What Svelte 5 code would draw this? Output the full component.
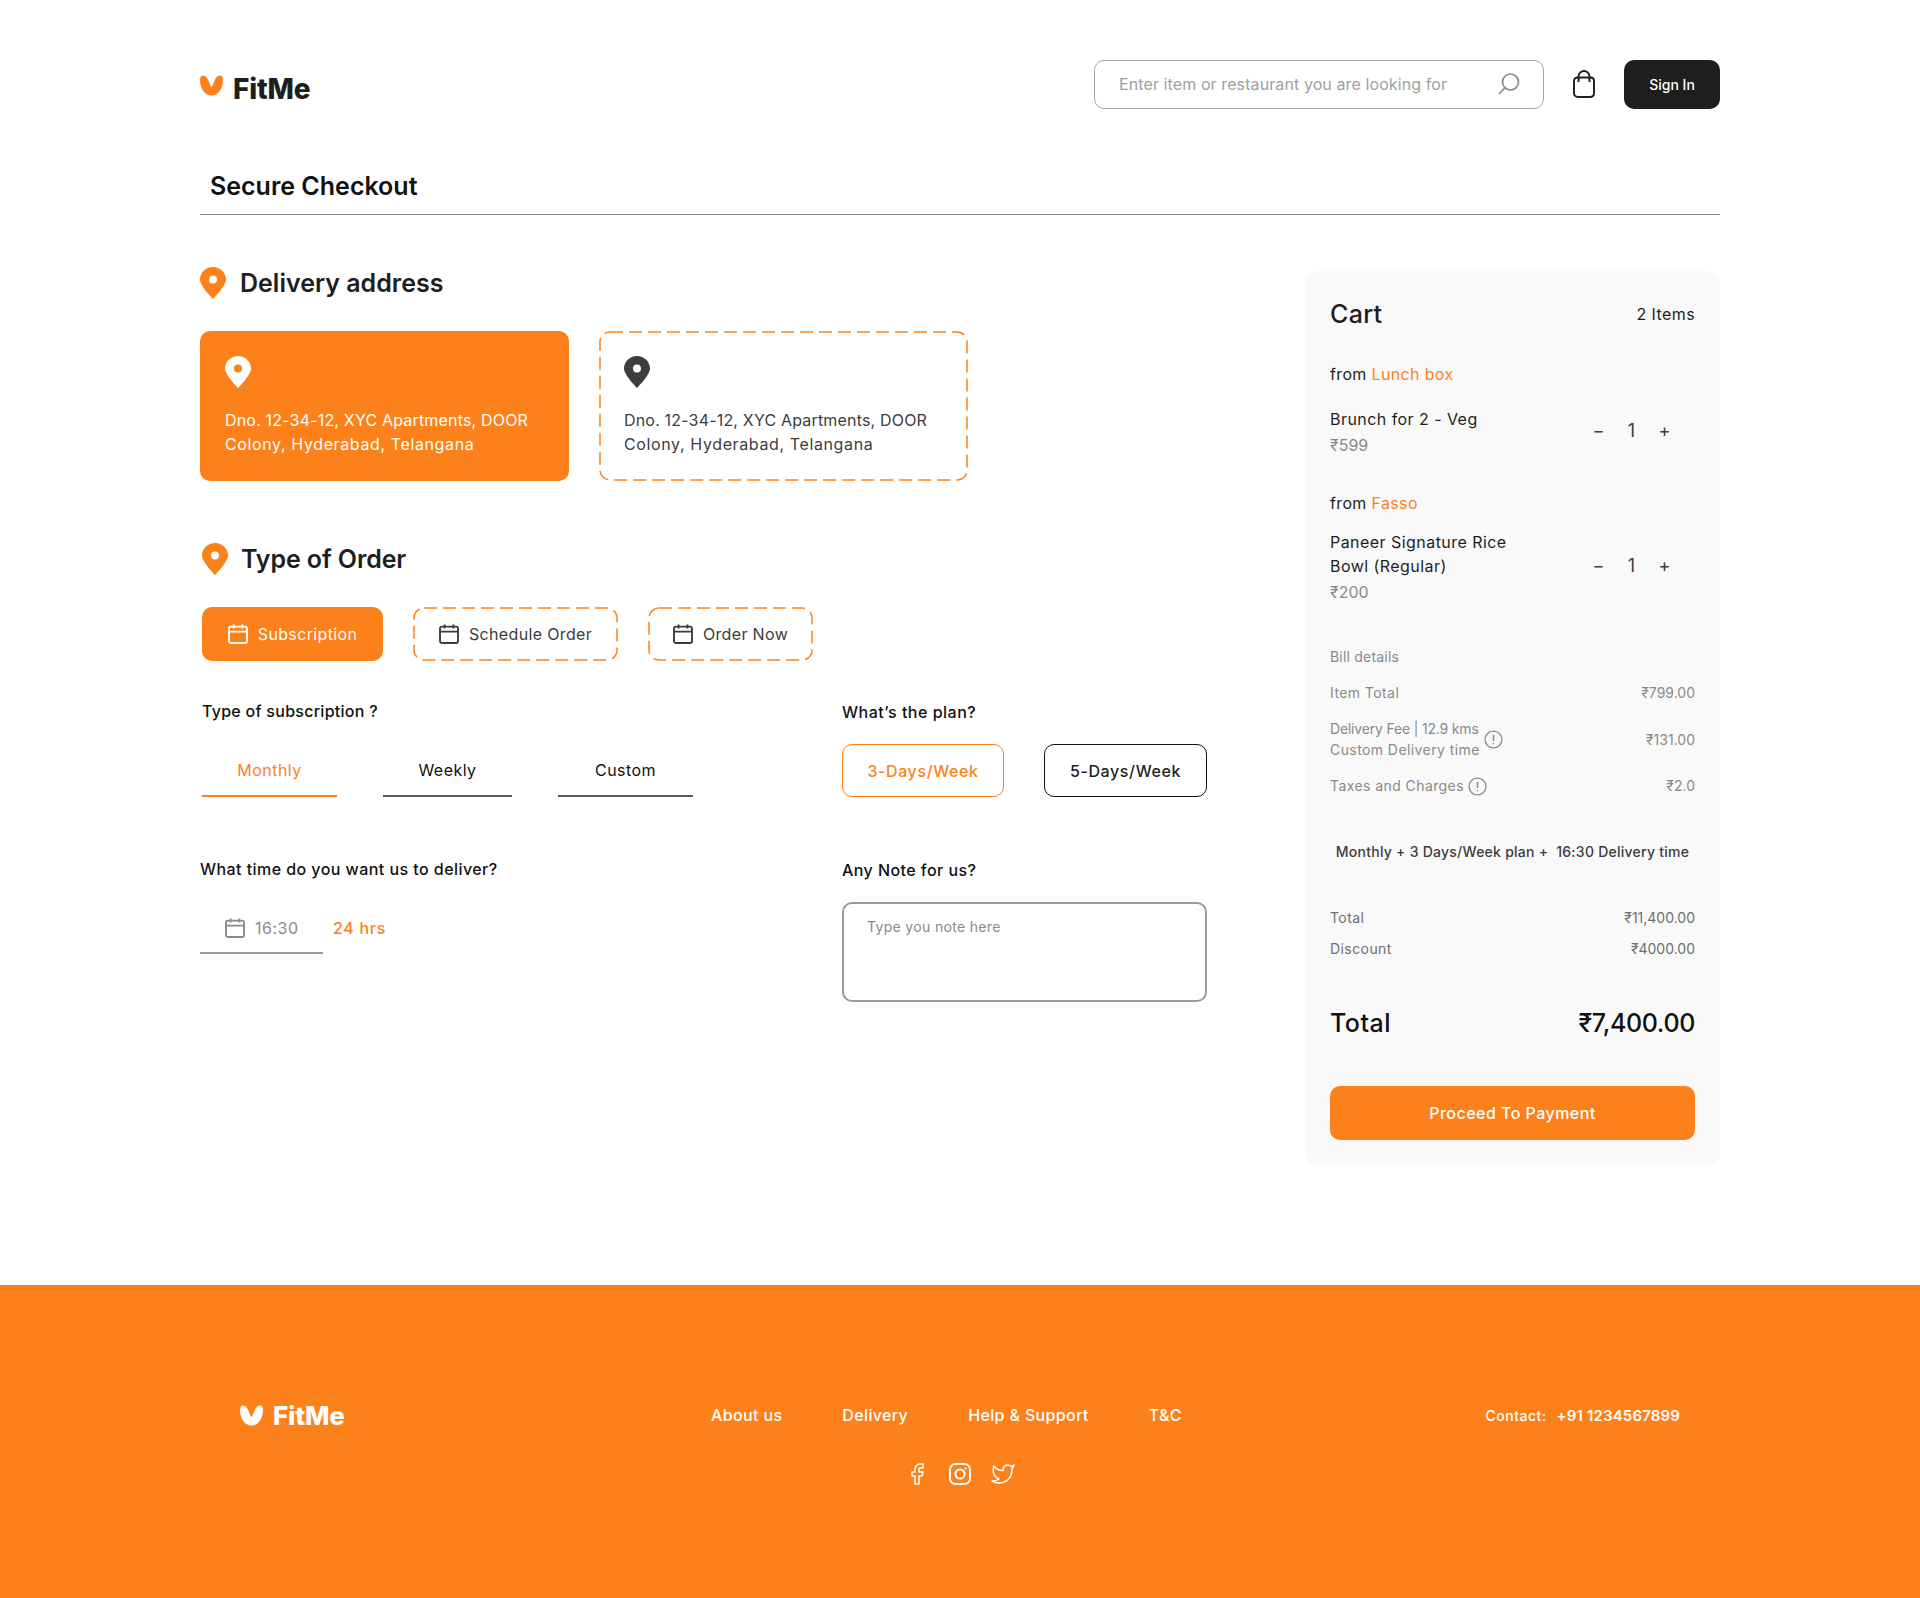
<script lang="ts">
  const addresses = [
    { id: 1, active: true, line1: 'Dno. 12-34-12, XYC Apartments, DOOR', line2: 'Colony, Hyderabad, Telangana' },
    { id: 2, active: false, line1: 'Dno. 12-34-12, XYC Apartments, DOOR', line2: 'Colony, Hyderabad, Telangana' }
  ];
  const orderTypes = [
    { label: 'Subscription', active: true, w: 181 },
    { label: 'Schedule Order', active: false, w: 205 },
    { label: 'Order Now', active: false, w: 165 }
  ];
  const tabs = [
    { label: 'Monthly', w: 135, gap: 46 },
    { label: 'Weekly', w: 129, gap: 46 },
    { label: 'Custom', w: 135, gap: 0 }
  ];
  const links = ['About us', 'Delivery', 'Help & Support', 'T&C'];
</script>

{#snippet logo()}
  <svg class="logo-mark" viewBox="0 0 24 22" aria-hidden="true">
    <path fill="currentColor" d="M3 0.5C1 0.5 0 2.5 0 5.5 0 14 5 21.5 12 21.5S24 14 24 5.5C24 2.5 23 0.5 21 0.5 18 0.5 16 3.5 14.5 7.5 13.5 10.5 12.6 12.5 12 12.5S10.5 10.5 9.5 7.5C8 3.5 6 0.5 3 0.5Z" />
  </svg>
{/snippet}

{#snippet pin(cls: string)}
  <svg class="pin {cls}" viewBox="0 0 26 32" aria-hidden="true">
    <path fill="currentColor" fill-rule="evenodd" d="M13 0C5.8 0 0 5.8 0 12.5 0 19 13 32 13 32S26 19 26 12.5C26 5.8 20.2 0 13 0ZM13 8.5A4 4 0 1 1 13 16.5 4 4 0 1 1 13 8.5Z" />
  </svg>
{/snippet}

{#snippet calendar()}
  <svg class="cal" viewBox="0 0 20 20" fill="none" stroke="currentColor" stroke-width="1.9" aria-hidden="true">
    <rect x="1" y="2.6" width="18" height="16.4" rx="2" />
    <path d="M1 7.6H19M5.6 0.4V4.4M14.4 0.4V4.4" />
  </svg>
{/snippet}

{#snippet dashes()}
  <svg class="dashes" aria-hidden="true"><rect x="1" y="1" rx="10" ry="10" /></svg>
{/snippet}

{#snippet info()}
  <svg class="info" viewBox="0 0 18 18" fill="none" stroke="currentColor" stroke-width="1.2" aria-hidden="true">
    <circle cx="9" cy="9" r="8" />
    <path d="M9 4.4V10.4M9 12.2V13.6" stroke-width="1.4" />
  </svg>
{/snippet}

<div class="wrap">
  <header class="top">
    <div class="brand">{@render logo()}<span>FitMe</span></div>
    <div class="search">
      <span class="search-text">Enter item or restaurant you are looking for</span>
      <svg class="search-icon" viewBox="0 0 22 22" fill="none" stroke="#8a8a8a" stroke-width="1.7" aria-hidden="true">
        <circle cx="12.5" cy="9" r="8" />
        <path d="M6.8 15 1 21" />
      </svg>
    </div>
    <svg class="bag" viewBox="0 0 22 28" fill="none" stroke="#1e1e1e" stroke-width="1.9" aria-hidden="true">
      <path d="M4.5 7.5H17.5C19.5 7.5 21 9 21 11V23C21 25.5 19.5 27 17 27H5C2.5 27 1 25.5 1 23V11C1 9 2.5 7.5 4.5 7.5Z" />
      <path d="M5.5 12V6.5a5.5 5.5 0 0 1 11 0V12" />
    </svg>
    <button class="signin">Sign In</button>
  </header>

  <h1 class="page-title">Secure Checkout</h1>

  <main class="main">
    <div class="left">
      <h2 class="sec-head first">{@render pin('orange')}Delivery address</h2>
      <div class="addr-row">
        {#each addresses as a (a.id)}
          <div class="addr" class:active={a.active}>
            {#if !a.active}{@render dashes()}{/if}
            {@render pin(a.active ? 'white' : 'dark')}
            <p>{a.line1}<br /><span class="addr-l2">{a.line2}</span></p>
          </div>
        {/each}
      </div>

      <h2 class="sec-head second">{@render pin('orange')}Type of Order</h2>
      <div class="order-row">
        {#each orderTypes as o}
          <button class="order-btn" class:active={o.active} style="width:{o.w}px">
            {#if !o.active}{@render dashes()}{/if}
            {@render calendar()}
            {o.label}
          </button>
        {/each}
      </div>

      <div class="form-grid">
        <div class="cell-sub">
          <div class="label">Type of subscription ?</div>
          <div class="tabs">
            {#each tabs as t, i}
              <div class="tab" class:on={i === 0} style="width:{t.w}px;margin-right:{t.gap}px">{t.label}</div>
            {/each}
          </div>
        </div>
        <div>
          <div class="label plan-label">What’s the plan?</div>
          <div class="plans">
            <div class="plan on">3-Days/Week</div>
            <div class="plan">5-Days/Week</div>
          </div>
        </div>
        <div>
          <div class="label wide">What time do you want us to deliver?</div>
          <div class="time-row">
            <div class="time">{@render calendar()}16:30</div>
            <span class="hrs">24 hrs</span>
          </div>
        </div>
        <div>
          <div class="label wide note-label">Any Note for us?</div>
          <div class="note">Type you note here</div>
        </div>
      </div>
    </div>

    <aside class="cart">
      <div class="cart-head"><span class="cart-title">Cart</span><span class="cart-count">2 Items</span></div>

      <div class="from first-from">from <em>Lunch box</em></div>
      <div class="item item-a">
        <div>
          <div class="item-name">Brunch for 2 - Veg</div>
          <div class="item-price">₹599</div>
        </div>
        <div class="qty"><span>−</span><span>1</span><span>+</span></div>
      </div>

      <div class="from second-from">from <em>Fasso</em></div>
      <div class="item item-b">
        <div>
          <div class="item-name">Paneer Signature Rice<br />Bowl (Regular)</div>
          <div class="item-price">₹200</div>
        </div>
        <div class="qty"><span>−</span><span>1</span><span>+</span></div>
      </div>

      <div class="bill-title">Bill details</div>
      <div class="bill"><span>Item Total</span><span>₹799.00</span></div>
      <div class="bill tall">
        <span class="with-info"><span><span class="fee-line">Delivery Fee | 12.9 kms</span><br />Custom Delivery time</span>{@render info()}</span>
        <span>₹131.00</span>
      </div>
      <div class="bill"><span class="with-info">Taxes and Charges{@render info()}</span><span>₹2.0</span></div>

      <div class="summary">Monthly + 3 Days/Week plan +&nbsp; 16:30 Delivery time</div>

      <div class="bill total-a"><span>Total</span><span>₹11,400.00</span></div>
      <div class="bill total-b"><span>Discount</span><span>₹4000.00</span></div>

      <div class="grand"><span class="grand-label">Total</span><span class="grand-amt">₹7,400.00</span></div>
      <button class="pay">Proceed To Payment</button>
    </aside>
  </main>
</div>

<footer class="footer">
  <div class="foot-row">
    <div class="brand foot-brand">{@render logo()}<span>FitMe</span></div>
    <nav class="foot-links">
      {#each links as l}<span>{l}</span>{/each}
    </nav>
    <div class="contact"><span class="c-label">Contact:</span><span class="c-num">+91 1234567899</span></div>
  </div>
  <div class="social">
    <svg viewBox="0 0 24 24" fill="none" stroke="#fff" stroke-width="1.5" stroke-linejoin="round" aria-hidden="true">
      <path d="M18 2h-3a5 5 0 0 0-5 5v3H7v4h3v8h4v-8h3l1-4h-4V7a1 1 0 0 1 1-1h3z" />
    </svg>
    <svg viewBox="0 0 24 24" fill="none" stroke="#fff" stroke-width="2" aria-hidden="true">
      <rect x="2" y="2" width="20" height="20" rx="5.5" />
      <circle cx="12" cy="12" r="4.6" />
      <circle cx="17.6" cy="6.4" r="0.6" fill="#fff" stroke-width="1" />
    </svg>
    <svg viewBox="0 0 24 24" fill="none" stroke="#fff" stroke-width="1.5" stroke-linejoin="round" aria-hidden="true">
      <path d="M23 3a10.9 10.9 0 0 1-3 1.5 4.48 4.48 0 0 0-7.86 3v1A10.66 10.66 0 0 1 3 4s-4 9 5 13a11.64 11.64 0 0 1-7 2c9 5 20 0 20-11.5a4.5 4.5 0 0 0-.08-.83A7.72 7.72 0 0 0 23 3z" />
    </svg>
  </div>
</footer>

<style>
  :global(body) {
    margin: 0;
    background: #fff;
    color: #1e1e1e;
    font-family: Inter, "Noto Sans", sans-serif;
  }

  button {
    font-family: inherit;
    border: 0;
    cursor: pointer;
    padding: 0;
  }

  .wrap {
    width: 1520px;
    margin: 0 auto;
  }

  /* header */
  .top {
    display: flex;
    align-items: center;
    height: 50px;
    padding-top: 59px;
  }

  .brand {
    display: flex;
    align-items: center;
    gap: 10px;
    font-size: 28px;
    font-weight: 800;
    letter-spacing: -0.2px;
    color: #1e1e1e;
    position: relative;
    top: 5px;
  }

  .logo-mark {
    width: 23px;
    height: 21px;
    color: #fd811b;
    margin-top: -8px;
  }

  .search {
    margin-left: auto;
    width: 450px;
    height: 49px;
    box-sizing: border-box;
    border: 1px solid #a3a3a3;
    border-radius: 10px;
    display: flex;
    align-items: center;
    justify-content: space-between;
    padding: 0 23px 0 24px;
  }

  .search-text {
    font-size: 16px;
    letter-spacing: 0.1px;
    color: #a0a0a0;
  }

  .search-icon {
    width: 22px;
    height: 22px;
  }

  .bag {
    width: 22px;
    height: 28px;
    margin: 0 29px;
  }

  .signin {
    width: 96px;
    height: 49px;
    background: #1e1e1e;
    color: #fff;
    border-radius: 10px;
    font-size: 14px;
    font-weight: 500;
  }

  .page-title {
    margin: 57px 0 0;
    padding: 0 0 8px 10px;
    line-height: 40px;
    font-size: 25px;
    font-weight: 600;
    color: #111;
    border-bottom: 1px solid #888;
  }

  .main {
    display: flex;
    justify-content: space-between;
    align-items: flex-start;
    margin-top: 56px;
  }

  .left {
    width: 1010px;
  }

  .sec-head {
    display: flex;
    align-items: center;
    gap: 14px;
    height: 32px;
    margin: 0;
    font-size: 25px;
    font-weight: 600;
    color: #1e1e1e;
  }

  .sec-head.first {
    margin-top: -4px;
  }

  .sec-head.second {
    margin-top: 62px;
    padding-left: 2px;
    gap: 13px;
    letter-spacing: -0.1px;
  }

  .pin {
    width: 26px;
    height: 32px;
    flex: none;
  }

  .pin.orange { color: #fd811b; }
  .pin.white { color: #fff; }
  .pin.dark { color: #3d3d3d; }

  .addr-row {
    display: flex;
    gap: 30px;
    margin-top: 32px;
  }

  .addr {
    position: relative;
    width: 369px;
    height: 150px;
    box-sizing: border-box;
    padding: 25px 25px 0;
    border-radius: 10px;
    color: #3d3d3d;
  }

  .addr.active {
    background: #fd811b;
    color: #fff;
  }

  .addr p {
    margin: 16px 0 0;
    font-size: 16px;
    line-height: 24px;
    letter-spacing: 0.18px;
  }

  .addr-l2 {
    letter-spacing: 0.62px;
  }

  .dashes {
    position: absolute;
    inset: 0;
    width: 100%;
    height: 100%;
    pointer-events: none;
  }

  .dashes rect {
    width: calc(100% - 2px);
    height: calc(100% - 2px);
    fill: none;
    stroke: #fd811b;
    stroke-width: 1.5;
    stroke-dasharray: 13 6;
  }

  .order-row {
    display: flex;
    gap: 30px;
    margin-top: 32px;
    padding-left: 2px;
  }

  .order-btn {
    position: relative;
    height: 54px;
    border-radius: 10px;
    background: none;
    color: #3d3d3d;
    font-size: 16px;
    letter-spacing: 0.35px;
    display: flex;
    align-items: center;
    justify-content: center;
    gap: 10px;
  }

  .order-btn.active {
    background: #fd811b;
    color: #fff;
  }

  .cal {
    width: 20px;
    height: 20px;
    flex: none;
  }

  .form-grid {
    display: grid;
    grid-template-columns: 642px 1fr;
    row-gap: 60px;
    margin-top: 38px;
  }

  .cell-sub {
    padding-left: 2px;
  }

  .label {
    font-size: 16px;
    font-weight: 500;
    line-height: 24px;
    letter-spacing: 0.27px;
    color: #111;
  }

  .label.wide {
    letter-spacing: 0.44px;
  }

  .plan-label {
    letter-spacing: 0.5px;
    position: relative;
    top: 1px;
  }

  .note-label {
    position: relative;
    top: 1px;
  }

  .tabs {
    display: flex;
    margin-top: 20px;
  }

  .tab {
    height: 54px;
    box-sizing: border-box;
    display: flex;
    align-items: center;
    justify-content: center;
    padding-top: 2px;
    font-size: 16px;
    letter-spacing: 0.45px;
    color: #111;
    border-bottom: 2px solid #5a5a5a;
  }

  .tab.on {
    color: #fd811b;
    border-bottom-color: #fd811b;
  }

  .plans {
    display: flex;
    gap: 40px;
    margin-top: 21px;
  }

  .plan {
    width: 163px;
    height: 53px;
    box-sizing: border-box;
    border: 1px solid #111;
    border-radius: 10px;
    display: flex;
    align-items: center;
    justify-content: center;
    font-size: 16px;
    font-weight: 500;
    letter-spacing: 0.6px;
    color: #1e1e1e;
  }

  .plan.on {
    width: 162px;
    border-color: #fd811b;
    color: #fd811b;
  }

  .time-row {
    display: flex;
    align-items: flex-start;
    margin-top: 23px;
  }

  .time {
    width: 123px;
    height: 50px;
    box-sizing: border-box;
    padding-left: 25px;
    display: flex;
    align-items: center;
    gap: 10px;
    font-size: 16px;
    letter-spacing: 0.5px;
    color: #8a8a8a;
    border-bottom: 2px solid #999;
  }

  .hrs {
    margin-left: 10px;
    line-height: 48px;
    font-size: 16px;
    font-weight: 500;
    letter-spacing: 0.7px;
    color: #fd811b;
  }

  .note {
    width: 365px;
    height: 100px;
    box-sizing: border-box;
    margin-top: 21px;
    padding: 13px 23px;
    border: 2px solid #9a9a9a;
    border-radius: 10px;
    font-size: 14px;
    line-height: 20px;
    letter-spacing: 0.33px;
    color: #8a8a8a;
  }

  /* cart */
  .cart {
    width: 415px;
    box-sizing: border-box;
    padding: 25px;
    background: #f9f9f9;
    border-radius: 12px;
  }

  .cart-head {
    display: flex;
    justify-content: space-between;
    align-items: center;
    height: 36px;
  }

  .cart-title {
    font-size: 25px;
    font-weight: 500;
    letter-spacing: 0.3px;
  }

  .cart-count {
    font-size: 16px;
    letter-spacing: 0.4px;
  }

  .from {
    font-size: 16px;
    line-height: 24px;
    letter-spacing: 0.35px;
  }

  .from em {
    font-style: normal;
    color: #fd811b;
  }

  .first-from { margin-top: 30px; }
  .second-from { margin-top: 34px; }

  .item {
    display: flex;
    justify-content: space-between;
    align-items: center;
  }

  .item-a { margin-top: 21px; }
  .item-b { margin-top: 15px; }

  .item-name {
    font-size: 16px;
    line-height: 24px;
    letter-spacing: 0.45px;
  }

  .item-price {
    margin-top: 2px;
    font-size: 16px;
    line-height: 24px;
    color: #8a8a8a;
  }

  .qty {
    display: grid;
    grid-template-columns: repeat(3, 33px);
    justify-items: center;
    padding-right: 14px;
    margin-top: -3px;
    font-size: 18px;
    color: #3d3d3d;
  }

  .bill-title {
    margin-top: 43px;
    font-size: 14px;
    line-height: 20px;
    letter-spacing: 0.2px;
    color: #8a8a8a;
  }

  .bill {
    display: flex;
    justify-content: space-between;
    align-items: center;
    margin-top: 16px;
    font-size: 14px;
    line-height: 20px;
    color: #8a8a8a;
  }

  .bill > span:first-child {
    letter-spacing: 0.42px;
  }

  .bill.tall {
    margin-top: 15px;
    line-height: 21px;
  }

  .fee-line {
    letter-spacing: -0.18px;
  }

  .with-info {
    display: flex;
    align-items: center;
    gap: 4px;
  }

  .info {
    width: 19px;
    height: 19px;
    flex: none;
  }

  .summary {
    margin-top: 45px;
    font-size: 14px;
    font-weight: 500;
    line-height: 22px;
    letter-spacing: 0.25px;
    text-align: center;
    white-space: nowrap;
    color: #3d3d3d;
  }

  .total-a { margin-top: 45px; color: #6f6f6f; }
  .total-b { margin-top: 11px; color: #6f6f6f; }

  .grand {
    display: flex;
    justify-content: space-between;
    align-items: center;
    height: 36px;
    margin-top: 46px;
    font-size: 25px;
    font-weight: 500;
    color: #111;
  }

  .grand-label { letter-spacing: 0.5px; }
  .grand-amt { letter-spacing: -0.35px; }

  .pay {
    width: 100%;
    height: 54px;
    margin-top: 45px;
    background: #fd811b;
    border-radius: 10px;
    color: #fff;
    font-size: 16px;
    font-weight: 500;
    letter-spacing: 0.47px;
  }

  /* footer */
  .footer {
    height: 313px;
    box-sizing: border-box;
    margin-top: 120px;
    padding-top: 118px;
    background: #fd811b;
    color: #fff;
  }

  .foot-row {
    width: 1440px;
    margin: 0 auto;
    display: flex;
    align-items: center;
    height: 24px;
  }

  .foot-brand {
    width: 471px;
    color: #fff;
    font-size: 26px;
    top: 0;
  }

  .foot-brand .logo-mark {
    color: #fff;
    margin-top: 0;
  }

  .foot-links {
    display: flex;
    gap: 60px;
    font-size: 16px;
    font-weight: 500;
    letter-spacing: 0.36px;
  }

  .contact {
    margin-left: auto;
    display: flex;
    align-items: center;
    gap: 10px;
  }

  .c-label {
    font-size: 14px;
    font-weight: 500;
    letter-spacing: 0.5px;
  }

  .c-num {
    font-size: 15px;
    font-weight: 600;
    letter-spacing: 0.15px;
  }

  .social {
    display: flex;
    justify-content: center;
    gap: 19px;
    margin-top: 35px;
  }

  .social svg {
    width: 24px;
    height: 24px;
  }
</style>
